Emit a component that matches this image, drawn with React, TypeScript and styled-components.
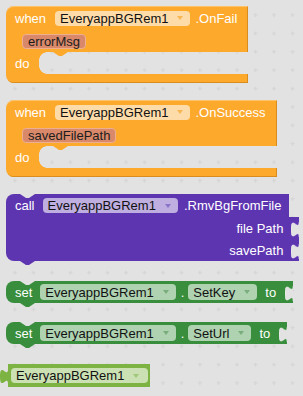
import React from "react";
import styled, { createGlobalStyle, css } from "styled-components";

const BG = "#e2e2e2";

type Tone = "orange" | "purple" | "green" | "lime";

const PAL: Record<Tone, { body: string; dark: string; field: string; arrow: string }> = {
  orange: { body: "#fda92c", dark: "#d98d1e", field: "#fedcaa", arrow: "#f7b752" },
  purple: { body: "#5e35b1", dark: "#4a2891", field: "#bfaee0", arrow: "#8b73c9" },
  green: { body: "#388e3c", dark: "#2c7230", field: "#afd2b1", arrow: "#79ad7c" },
  lime: { body: "#7cb342", dark: "#679637", field: "#cbe1b4", arrow: "#a0c878" },
};

const Global = createGlobalStyle`
  html, body { margin: 0; padding: 0; background: ${BG}; }
  body { font-family: "Liberation Sans", Arial, sans-serif; }
`;

const Workspace = styled.div`
  position: relative;
  width: 303px;
  height: 396px;
  overflow: hidden;
  background: ${BG};
`;

const GridLayer = styled.svg`
  position: absolute;
  left: 0;
  top: 0;
  width: 100%;
  height: 100%;
`;

const Stack = styled.div`
  position: relative;
  display: flex;
  flex-direction: column;
  align-items: flex-start;
  padding: 6px 0 0 6px;
`;

const Label = styled.span<{ $ml?: number }>`
  color: #fff;
  font-size: 13px;
  line-height: 15px;
  white-space: nowrap;
  margin-left: ${(p) => p.$ml ?? 0}px;
`;

const FieldBox = styled.span<{ $tone: Tone; $ml?: number; $h?: number; $pr?: number }>`
  display: inline-flex;
  align-items: center;
  height: ${(p) => p.$h ?? 15}px;
  margin-left: ${(p) => p.$ml ?? 0}px;
  padding: 0 ${(p) => p.$pr ?? 7}px 0 5px;
  border-radius: 4px;
  background: ${(p) => PAL[p.$tone].field};
  color: #111;
  font-size: 13px;
  line-height: 15px;
  white-space: nowrap;
`;

const Arrow = styled.span<{ $tone: Tone }>`
  width: 0;
  height: 0;
  margin-left: 9px;
  border-left: 3px solid transparent;
  border-right: 3px solid transparent;
  border-top: 4px solid ${(p) => PAL[p.$tone].arrow};
`;

const Param = styled.span`
  display: inline-flex;
  align-items: center;
  height: 13px;
  padding: 0 5px;
  border: 1px solid #eeae90;
  border-radius: 4px;
  background: #d9896a;
  color: #1c1c1c;
  font-size: 13px;
  line-height: 15px;
`;

/* ---------- shared notch shapes ---------- */
const notchShape = css`
  content: "";
  position: absolute;
  left: 14px;
  width: 15px;
  height: 4px;
  clip-path: polygon(0 0, 100% 0, 60% 100%, 40% 100%);
`;

/* ---------- event block ---------- */
const EventBlock = styled.div<{ $mt: number }>`
  display: inline-flex;
  flex-direction: column;
  margin-top: ${(p) => p.$mt}px;
`;

const EventHead = styled.div`
  display: flex;
  align-items: center;
  height: 24px;
  padding: 0 11px 0 9px;
  background: ${PAL.orange.body};
  border-top-left-radius: 8px;
  box-shadow: inset 0 1px 0 rgba(255, 255, 255, 0.3), inset -1px 0 0 ${PAL.orange.dark};
`;

const EventParamRow = styled.div`
  display: flex;
  align-items: center;
  height: 22px;
  padding-left: 16px;
  background: ${PAL.orange.body};
  box-shadow: inset -1px 0 0 ${PAL.orange.dark};
`;

const DoRow = styled.div`
  display: flex;
  height: 22px;
`;

const DoLabel = styled.div`
  display: flex;
  align-items: center;
  width: 24px;
  padding-left: 9px;
  background: ${PAL.orange.body};
`;

const Slot = styled.div`
  position: relative;
  flex: 1;
  background:
    radial-gradient(circle at 100% 100%, transparent 7.5px, ${PAL.orange.body} 8px) 0 0 / 8px 8px no-repeat,
    radial-gradient(circle at 100% 0, transparent 7.5px, ${PAL.orange.body} 8px) 0 100% / 8px 8px no-repeat;
  &::before {
    ${notchShape};
    top: 0;
    background: ${PAL.orange.body};
  }
`;

const EventFoot = styled.div`
  height: 9px;
  background: ${PAL.orange.body};
  border-bottom-left-radius: 8px;
  box-shadow: inset -1px -1px 0 ${PAL.orange.dark};
`;

/* ---------- call block ---------- */
const CallBlock = styled.div<{ $mt: number }>`
  position: relative;
  display: inline-grid;
  margin-top: ${(p) => p.$mt}px;
  &::before {
    ${notchShape};
    top: 0;
    background: ${BG};
    z-index: 1;
  }
  &::after {
    ${notchShape};
    bottom: -4px;
    background: ${PAL.purple.body};
  }
`;

const CallHead = styled.div`
  display: flex;
  align-items: center;
  height: 23px;
  padding: 0 8px 0 9px;
  background: ${PAL.purple.body};
  border-top-left-radius: 8px;
`;

const ArgRow = styled.div<{ $last?: boolean }>`
  display: flex;
  align-items: center;
  justify-content: flex-end;
  height: 22px;
  margin-right: -10px;
  background: ${PAL.purple.body};
  border-bottom-left-radius: ${(p) => (p.$last ? 8 : 0)}px;
`;

/* ---------- set block ---------- */
const SetBlock = styled.div<{ $mt: number }>`
  position: relative;
  display: inline-flex;
  align-items: center;
  height: 22px;
  margin-top: ${(p) => p.$mt}px;
  padding-left: 9px;
  background: ${PAL.green.body};
  border-radius: 8px 0 0 8px;
  &::before {
    ${notchShape};
    top: 0;
    background: ${BG};
  }
  &::after {
    ${notchShape};
    bottom: -4px;
    background: ${PAL.green.body};
  }
`;

/* ---------- component block ---------- */
const CompBlock = styled.div<{ $mt: number }>`
  position: relative;
  display: inline-flex;
  align-items: center;
  height: 23px;
  margin: ${(p) => p.$mt}px 0 0 2px;
  padding: 0 2px 0 3px;
  background: ${PAL.lime.body};
`;

const OutTab = styled.svg`
  position: absolute;
  left: -8px;
  top: 5px;
`;

const TAB = "M8 0 c0 10 -8 -8 -8 7.5 s8 -2.5 8 7.5 Z";

const Socket: React.FC<{ tone: Tone; ml?: number }> = ({ ml = 0 }) => (
  <svg width="8" height="22" viewBox="0 0 8 22" style={{ marginLeft: ml, flex: "none" }}>
    <path d={`M8 5 c0 10 -8 -8 -8 7.5 s8 -2.5 8 7.5 Z`} fill={BG} />
    <path
      d={`M8 5 c0 10 -8 -8 -8 7.5 s8 -2.5 8 7.5`}
      fill="none"
      stroke="rgba(255,255,255,0.45)"
      strokeWidth="1"
    />
  </svg>
);

const Drop: React.FC<{ tone: Tone; text: string; ml?: number; h?: number; pr?: number }> = ({
  tone,
  text,
  ml,
  h,
  pr,
}) => (
  <FieldBox $tone={tone} $ml={ml} $h={h} $pr={pr}>
    {text}
    <Arrow $tone={tone} />
  </FieldBox>
);

const Grid: React.FC = () => (
  <GridLayer>
    <defs>
      <pattern id="grid" width="18.5" height="18.4" patternUnits="userSpaceOnUse" x="5.5" y="5.5">
        <path d="M7.5 9.5 H11.5 M9.5 7.5 V11.5" stroke="#d3d3d3" strokeWidth="1" />
      </pattern>
    </defs>
    <rect width="100%" height="100%" fill="url(#grid)" />
  </GridLayer>
);

const Event: React.FC<{ event: string; param: string; mt: number }> = ({ event, param, mt }) => (
  <EventBlock $mt={mt}>
    <EventHead>
      <Label>when</Label>
      <Drop tone="orange" text="EveryappBGRem1" ml={9} />
      <Label $ml={5}>{event}</Label>
    </EventHead>
    <EventParamRow>
      <Param>{param}</Param>
    </EventParamRow>
    <DoRow>
      <DoLabel>
        <Label>do</Label>
      </DoLabel>
      <Slot />
    </DoRow>
    <EventFoot />
  </EventBlock>
);

const Setter: React.FC<{ prop: string; mt: number }> = ({ prop, mt }) => (
  <SetBlock $mt={mt}>
    <Label>set</Label>
    <Drop tone="green" text="EveryappBGRem1" ml={8} h={16} />
    <Label $ml={5}>.</Label>
    <Drop tone="green" text={prop} ml={4} h={16} />
    <Label $ml={8}>to</Label>
    <Socket tone="green" ml={9} />
  </SetBlock>
);

export default function App() {
  return (
    <>
      <Global />
      <Workspace>
        <Grid />
        <Stack>
          <Event event=".OnFail" param="errorMsg" mt={0} />
          <Event event=".OnSuccess" param="savedFilePath" mt={17} />
          <CallBlock $mt={17}>
            <CallHead>
              <Label>call</Label>
              <Drop tone="purple" text="EveryappBGRem1" ml={8} />
              <Label $ml={6}>.RmvBgFromFile</Label>
            </CallHead>
            <ArgRow>
              <Label>file Path</Label>
              <Socket tone="purple" ml={8} />
            </ArgRow>
            <ArgRow $last>
              <Label>savePath</Label>
              <Socket tone="purple" ml={8} />
            </ArgRow>
          </CallBlock>
          <Setter prop="SetKey" mt={20} />
          <Setter prop="SetUrl" mt={19} />
          <CompBlock $mt={20}>
            <OutTab width="8" height="15" viewBox="0 0 8 15">
              <path d={TAB} fill={PAL.lime.body} />
            </OutTab>
            <Drop tone="lime" text="EveryappBGRem1" pr={9} />
          </CompBlock>
        </Stack>
      </Workspace>
    </>
  );
}
